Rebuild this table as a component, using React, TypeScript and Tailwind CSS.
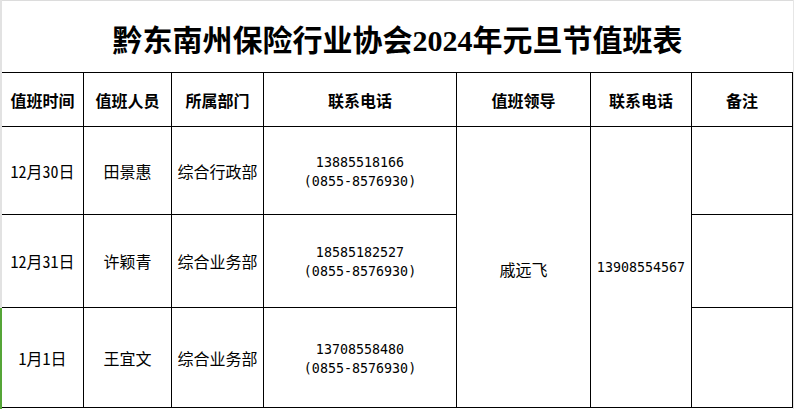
import React from "react";

const rows = [
  { date: "12月30日", name: "田景惠", dept: "综合行政部", phone: "13885518166", tel: "(0855-8576930)" },
  { date: "12月31日", name: "许颖青", dept: "综合业务部", phone: "18585182527", tel: "(0855-8576930)" },
  { date: "1月1日", name: "王宜文", dept: "综合业务部", phone: "13708558480", tel: "(0855-8576930)" },
];

const headers = ["值班时间", "值班人员", "所属部门", "联系电话", "值班领导", "联系电话", "备注"];

const cell = "border-r border-b border-black flex items-center justify-center text-center";
const mono = { fontFamily: '"DejaVu Sans Mono", "Liberation Mono", monospace' };

export default function App() {
  return (
    <div className="flex w-[794px] h-[409px] bg-white overflow-hidden text-black">
      <div className="w-[2px] flex flex-col">
        <div className="h-[308px] bg-[#e2e2e2]" />
        <div className="flex-1 bg-[#55a537]" />
      </div>
      <div className="w-[791px] flex flex-col">
        <div className="h-px bg-[#dcdcdc]" />
        <div
          className="h-[71px] flex items-center justify-center pt-[9px] text-[30px] font-bold leading-none"
          style={{ fontFamily: '"Liberation Serif", "Noto Sans CJK SC", serif' }}
        >
          黔东南州保险行业协会2024年元旦节值班表
        </div>
        <div
          className="grid grid-cols-[82px_88px_92px_193px_134px_101px_101px] grid-rows-[54px_88px_93px_100px] border-t border-black text-[16px]"
          style={{ fontFamily: '"Noto Sans Mono CJK SC", "Noto Sans CJK SC", sans-serif' }}
        >
          {headers.map((h, i) => (
            <div key={i} className={`${cell} font-bold`}>
              {h}
            </div>
          ))}
          {rows.map((r, i) => (
            <React.Fragment key={i}>
              <div className={cell}>{r.date}</div>
              <div className={cell}>{r.name}</div>
              <div className={cell}>{r.dept}</div>
              <div className={`${cell} flex-col pt-[2px] text-[13.33px] leading-[19px] font-light`} style={mono}>
                <div>{r.phone}</div>
                <div>{r.tel}</div>
              </div>
              {i === 0 && (
                <>
                  <div className={`${cell} row-span-3 pt-[4px]`}>戚远飞</div>
                  <div className={`${cell} row-span-3 text-[13.33px] pt-[2px] font-light`} style={mono}>
                    13908554567
                  </div>
                </>
              )}
              <div className={cell} />
            </React.Fragment>
          ))}
        </div>
      </div>
      <div className="w-px bg-[#e6e6e6]" />
    </div>
  );
}
